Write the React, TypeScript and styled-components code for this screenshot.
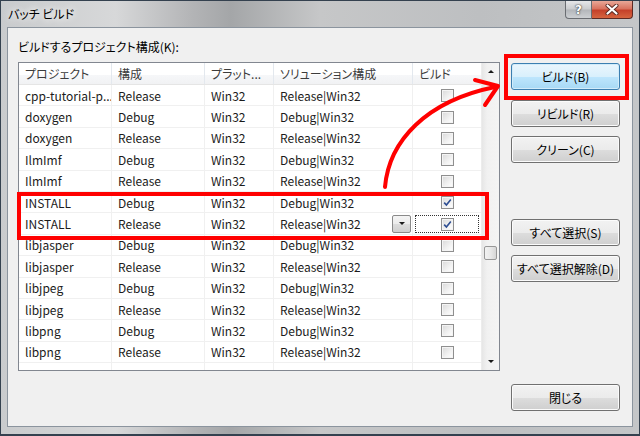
import styled, { createGlobalStyle } from "styled-components";
import React from "react";

interface row {
  project: string;
  config: string;
  platform: string;
  solution: string;
  build: boolean;
  focus?: boolean;
}

const rows: row[] = [
  { project: "cpp-tutorial-p...", config: "Release", platform: "Win32", solution: "Release|Win32", build: false },
  { project: "doxygen", config: "Debug", platform: "Win32", solution: "Debug|Win32", build: false },
  { project: "doxygen", config: "Release", platform: "Win32", solution: "Release|Win32", build: false },
  { project: "IlmImf", config: "Debug", platform: "Win32", solution: "Debug|Win32", build: false },
  { project: "IlmImf", config: "Release", platform: "Win32", solution: "Release|Win32", build: false },
  { project: "INSTALL", config: "Debug", platform: "Win32", solution: "Debug|Win32", build: true },
  { project: "INSTALL", config: "Release", platform: "Win32", solution: "Release|Win32", build: true, focus: true },
  { project: "libjasper", config: "Debug", platform: "Win32", solution: "Debug|Win32", build: false },
  { project: "libjasper", config: "Release", platform: "Win32", solution: "Release|Win32", build: false },
  { project: "libjpeg", config: "Debug", platform: "Win32", solution: "Debug|Win32", build: false },
  { project: "libjpeg", config: "Release", platform: "Win32", solution: "Release|Win32", build: false },
  { project: "libpng", config: "Debug", platform: "Win32", solution: "Debug|Win32", build: false },
  { project: "libpng", config: "Release", platform: "Win32", solution: "Release|Win32", build: false },
];

const columns = ["プロジェクト", "構成", "プラット...", "ソリューション構成", "ビルド"];

const App = () => {
  return (
    <>
      <GlobalStyle />
      <Window>
        <TitleBar>
          <Title>バッチ ビルド</Title>
          <CaptionButtons>
            <HelpButton>?</HelpButton>
            <CloseButton>
              <svg width="14" height="11" viewBox="0 0 14 11">
                <path d="M2.5 1.5 L11.5 9.5 M11.5 1.5 L2.5 9.5" stroke="#5a2a22" strokeWidth="4" strokeLinecap="round" />
                <path d="M2.5 1.5 L11.5 9.5 M11.5 1.5 L2.5 9.5" stroke="#ffffff" strokeWidth="2.2" strokeLinecap="round" />
              </svg>
            </CloseButton>
          </CaptionButtons>
        </TitleBar>
        <Client>
          <Label>ビルドするプロジェクト構成(K):</Label>
          <ListBox>
            <Table>
              <HeaderRow>
                {columns.map((col) => (
                  <HeaderCell key={col}>{col}</HeaderCell>
                ))}
              </HeaderRow>
              {rows.map((r, index) => (
                <Row key={index}>
                  <Cell>{r.project}</Cell>
                  <Cell>{r.config}</Cell>
                  <Cell>{r.platform}</Cell>
                  <Cell>
                    {r.solution}
                    {r.focus && (
                      <DropButton>
                        <DownGlyph />
                      </DropButton>
                    )}
                  </Cell>
                  <CheckCell>
                    <FocusBox $focus={!!r.focus}>
                      <CheckBox>
                        {r.build && (
                          <svg width="11" height="11" viewBox="0 0 11 11">
                            <path d="M2.2 5.6 L4.4 8 L8.8 2.4" stroke="#2d4d92" strokeWidth="1.6" fill="none" />
                          </svg>
                        )}
                      </CheckBox>
                    </FocusBox>
                  </CheckCell>
                </Row>
              ))}
              <Row>
                <Cell />
                <Cell />
                <Cell />
                <Cell />
                <CheckCell />
              </Row>
            </Table>
            <ScrollBar>
              <ArrowBox>
                <UpGlyph />
              </ArrowBox>
              <Track>
                <Thumb />
              </Track>
              <ArrowBox>
                <DownGlyph />
              </ArrowBox>
            </ScrollBar>
          </ListBox>
          <ButtonColumn>
            <Button $default>ビルド(B)</Button>
            <Button $gap={10}>リビルド(R)</Button>
            <Button $gap={9}>クリーン(C)</Button>
            <Button $gap={56}>すべて選択(S)</Button>
            <Button $gap={9}>すべて選択解除(D)</Button>
            <CloseDialogButton>閉じる</CloseDialogButton>
          </ButtonColumn>
        </Client>

        <Highlight style={{ left: 16, top: 191, width: 472, height: 48 }} />
        <Highlight style={{ left: 503, top: 53, width: 125, height: 46 }} />
        <ArrowLayer width="640" height="436" viewBox="0 0 640 436">
          <path d="M384 186 C 388 140, 425 100, 494 86" stroke="#ff0000" strokeWidth="4" fill="none" strokeLinecap="round" />
          <path d="M474 79 L497 85 L484 104" stroke="#ff0000" strokeWidth="4" fill="none" strokeLinecap="round" strokeLinejoin="round" />
        </ArrowLayer>
      </Window>
    </>
  );
};

const GlobalStyle = createGlobalStyle`
  body {
    margin: 0;
    background: #ffffff;
    font-family: "Noto Sans CJK JP", sans-serif;
    font-feature-settings: "palt";
  }
`;

const Window = styled.div`
  position: relative;
  width: 640px;
  height: 436px;
  box-sizing: border-box;
  display: flex;
  flex-direction: column;
  border: 1px solid #34414f;
  border-bottom-width: 2px;
  background: linear-gradient(90deg, #c9cbcd 0%, #d7d8d9 18%, #b3b4b6 30%, #a4a6a8 36%, #c6c7c8 50%, #bdbfc1 75%, #c4c6c8 100%);
  overflow: hidden;
`;

const TitleBar = styled.div`
  height: 26px;
  display: flex;
  justify-content: space-between;
  align-items: flex-start;
  padding: 0 6px 0 7px;
`;

const Title = styled.div`
  font-size: 12px;
  line-height: 16px;
  margin-top: 5px;
  color: #000;
  text-shadow: 0 0 6px #ffffff, 0 0 10px #ffffff;
`;

const CaptionButtons = styled.div`
  display: flex;
`;

const HelpButton = styled.div`
  width: 27px;
  height: 18px;
  box-sizing: border-box;
  border: 1px solid #6a6d72;
  border-top: none;
  border-radius: 0 0 0 4px;
  background: linear-gradient(#e6e7e9 0%, #c9cbce 48%, #b3b6ba 52%, #cdd0d3 100%);
  display: flex;
  justify-content: center;
  align-items: center;
  font-family: "DejaVu Sans", sans-serif;
  font-weight: bold;
  font-size: 12px;
  color: #fff;
  text-shadow: 0 0 1px #333, 0 0 2px #333;
`;

const CloseButton = styled.div`
  width: 41px;
  height: 18px;
  box-sizing: border-box;
  border: 1px solid #5d2a24;
  border-left: none;
  border-top: none;
  border-radius: 0 0 4px 0;
  background: linear-gradient(#e9a898 0%, #d9735f 45%, #c5412a 55%, #d6643f 100%);
  display: flex;
  justify-content: center;
  align-items: center;
`;

const Client = styled.div`
  flex: 1;
  margin: 0 6px 7px 6px;
  background: #f0f0f0;
  border: 1px solid #8b949e;
  display: grid;
  grid-template-columns: 482px 109px;
  grid-template-rows: auto 1fr;
  column-gap: 11px;
  padding: 11px 12px 15px 10px;
`;

const Label = styled.div`
  grid-column: 1 / 3;
  font-size: 12px;
  line-height: 16px;
  height: 16px;
  margin-bottom: 7px;
  color: #000;
`;

const ListBox = styled.div`
  height: 309px;
  box-sizing: border-box;
  border: 1px solid #828790;
  background: #ffffff;
  display: flex;
  overflow: hidden;
`;

const Table = styled.div`
  width: 463px;
  display: flex;
  flex-direction: column;
  overflow: hidden;
`;

const HeaderRow = styled.div`
  display: grid;
  grid-template-columns: 93px 93px 69px 139px 69px;
  height: 22px;
  flex-shrink: 0;
  box-sizing: border-box;
  background: linear-gradient(#ffffff 0%, #ffffff 55%, #f6f7f9 56%, #f1f2f4 100%);
  border-bottom: 1px solid #e5e5e5;
`;

const HeaderCell = styled.div`
  display: flex;
  align-items: center;
  padding-left: 6px;
  border-right: 1px solid #e3e8ee;
  font-size: 12px;
  color: #3c3c3c;
  white-space: nowrap;
  overflow: hidden;
`;

const Row = styled.div`
  display: grid;
  grid-template-columns: 93px 93px 69px 139px 69px;
  height: 21.4px;
  flex-shrink: 0;
  box-sizing: border-box;
  border-bottom: 1px solid #f0f0f0;
`;

const Cell = styled.div`
  display: flex;
  align-items: center;
  justify-content: space-between;
  padding-left: 6px;
  border-right: 1px solid #f0f0f0;
  font-size: 12px;
  color: #1b1b1b;
  white-space: nowrap;
  overflow: hidden;
`;

const CheckCell = styled.div`
  display: flex;
  align-items: center;
  justify-content: center;
  padding: 2px 3px 1px 2px;
`;

const FocusBox = styled.div<{ $focus: boolean }>`
  flex: 1;
  align-self: stretch;
  display: flex;
  align-items: center;
  justify-content: center;
  border: 1px dotted ${(props) => (props.$focus ? "#333" : "transparent")};
`;

const CheckBox = styled.span`
  width: 13px;
  height: 13px;
  box-sizing: border-box;
  border: 1px solid #8f8f8f;
  background: linear-gradient(135deg, #d8d8d8 0%, #f2f2f2 60%, #ffffff 100%);
  box-shadow: inset 0 0 0 1px #f4f4f4;
  display: flex;
  align-items: center;
  justify-content: center;
`;

const DropButton = styled.span`
  width: 19px;
  height: 18px;
  margin-right: 1px;
  box-sizing: border-box;
  border: 1px solid #8a8a8a;
  border-radius: 2px;
  background: linear-gradient(#f4f4f4 0%, #ebebeb 50%, #dcdcdc 51%, #cfcfcf 100%);
  display: flex;
  align-items: center;
  justify-content: center;
`;

const DownGlyph = styled.span`
  width: 0;
  height: 0;
  border-left: 3px solid transparent;
  border-right: 3px solid transparent;
  border-top: 3px solid #1a1a1a;
`;

const UpGlyph = styled.span`
  width: 0;
  height: 0;
  border-left: 3px solid transparent;
  border-right: 3px solid transparent;
  border-bottom: 3px solid #1a1a1a;
`;

const ScrollBar = styled.div`
  width: 17px;
  display: flex;
  flex-direction: column;
  background: linear-gradient(90deg, #e6e6e6 0%, #f1f1f1 30%, #f4f4f4 100%);
  border-left: 1px solid #ececec;
`;

const ArrowBox = styled.div`
  height: 17px;
  display: flex;
  align-items: center;
  justify-content: center;
`;

const Track = styled.div`
  flex: 1;
  display: flex;
  flex-direction: column;
  align-items: center;
`;

const Thumb = styled.div`
  width: 13px;
  height: 14px;
  margin-top: 166px;
  box-sizing: border-box;
  border: 1px solid #979797;
  border-radius: 2px;
  background: linear-gradient(90deg, #f2f2f2 0%, #e8e8e8 50%, #d6d6d6 100%);
`;

const ButtonColumn = styled.div`
  display: flex;
  flex-direction: column;
  padding-top: 1px;
`;

const Button = styled.div<{ $default?: boolean; $gap?: number }>`
  height: 27px;
  margin-top: ${(props) => (props.$gap ? `${props.$gap}px` : "0px")};
  box-sizing: border-box;
  border: 1px solid ${(props) => (props.$default ? "#3c7fb1" : "#707070")};
  border-radius: 3px;
  box-shadow: inset 0 0 0 1px ${(props) => (props.$default ? "#d2ecfa" : "#fbfbfb")};
  background: ${(props) =>
    props.$default
      ? "linear-gradient(#eaf6fd 0%, #d9f0fc 50%, #bee6fd 51%, #a7d9f5 100%)"
      : "linear-gradient(#f2f2f2 0%, #ebebeb 50%, #dddddd 51%, #cfcfcf 100%)"};
  display: flex;
  align-items: center;
  justify-content: center;
  font-size: 12px;
  color: #000;
  white-space: nowrap;
`;

const CloseDialogButton = styled(Button)`
  margin-top: auto;
`;

const Highlight = styled.div`
  position: absolute;
  box-sizing: border-box;
  border: 4px solid #ff0000;
  pointer-events: none;
`;

const ArrowLayer = styled.svg`
  position: absolute;
  left: 0;
  top: 0;
  pointer-events: none;
`;

export default App;
